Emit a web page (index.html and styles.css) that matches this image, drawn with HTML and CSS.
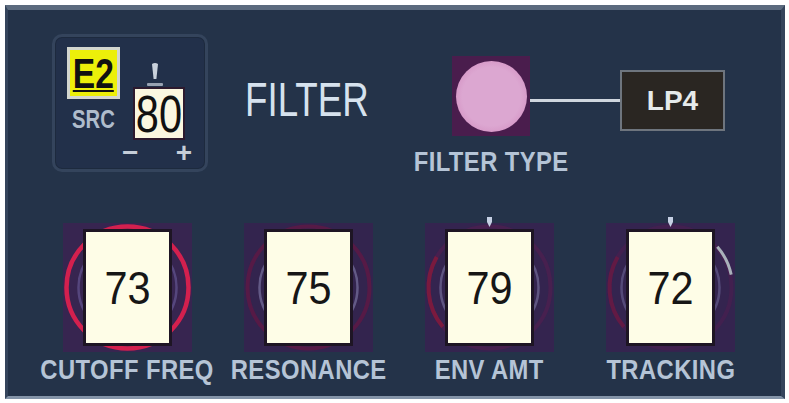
FILE: index.html
```html
<!DOCTYPE html>
<html lang="en">
<head>
<meta charset="utf-8">
<title>Filter</title>
<link rel="stylesheet" href="styles.css">
</head>
<body>
<div class="frame">
  <section class="panel">
    <div class="top">
      <div class="src">
        <div class="src-left">
          <div class="chip"><span class="chip-text">E2</span></div>
          <div class="src-label">SRC</div>
        </div>
        <div class="src-right">
          <svg class="src-tick" viewBox="0 0 20 24" aria-hidden="true">
            <path d="M7 1 Q10 -1 13 1 L11.4 16 H8.6 Z" fill="#c9d1dc"/>
            <rect x="2" y="20" width="16" height="3" rx="1" fill="#98a2b2"/>
          </svg>
          <div class="src-value"><span>80</span></div>
          <div class="src-steps"><span>−</span><span>+</span></div>
        </div>
      </div>

      <div class="title">FILTER</div>

      <div class="ftype">
        <div class="ftype-knob">
          <div class="ftype-pad"><div class="ftype-ball"></div></div>
          <div class="label">FILTER TYPE</div>
        </div>
        <div class="ftype-link">
          <div class="wire"></div>
          <div class="lp">LP4</div>
        </div>
      </div>
    </div>

    <div class="knobs">
      <div class="knob-col">
        <div class="knob">
          <svg viewBox="0 0 129 129" aria-hidden="true">
            <rect width="129" height="129" fill="#372550"/>
            <circle cx="64.5" cy="64.5" r="49" fill="none" stroke="#6f63a3" stroke-width="2.5" opacity=".55"/>
            <circle cx="64.5" cy="64.5" r="61" fill="none" stroke="#d3204e" stroke-width="4.5"/>
          </svg>
          <div class="knob-value"><span>73</span></div>
        </div>
        <div class="label">CUTOFF FREQ</div>
      </div>

      <div class="knob-col">
        <div class="knob">
          <svg viewBox="0 0 129 129" aria-hidden="true">
            <rect width="129" height="129" fill="#33244e"/>
            <circle cx="64.5" cy="64.5" r="49" fill="none" stroke="#8a86b4" stroke-width="2.5" opacity=".55"/>
            <circle cx="64.5" cy="64.5" r="61" fill="none" stroke="#561a46" stroke-width="4"/>
          </svg>
          <div class="knob-value"><span>75</span></div>
        </div>
        <div class="label">RESONANCE</div>
      </div>

      <div class="knob-col">
        <div class="knob">
          <svg viewBox="0 0 129 129" aria-hidden="true">
            <rect width="129" height="129" fill="#34244f"/>
            <circle cx="64.5" cy="64.5" r="49" fill="none" stroke="#8a86b4" stroke-width="2.5" opacity=".5"/>
            <circle cx="64.5" cy="64.5" r="61" fill="none" stroke="#47204f" stroke-width="4"/>
            <path d="M17.8 103.7 A61 61 0 0 1 11.7 34" fill="none" stroke="#7a1a3e" stroke-width="4"/>
            <path d="M62 -6 H67 V-1 L64.5 4 L62 -1 Z" fill="#c6d0e4"/>
          </svg>
          <div class="knob-value"><span>79</span></div>
        </div>
        <div class="label">ENV AMT</div>
      </div>

      <div class="knob-col">
        <div class="knob">
          <svg viewBox="0 0 129 129" aria-hidden="true">
            <rect width="129" height="129" fill="#34244f"/>
            <circle cx="64.5" cy="64.5" r="49" fill="none" stroke="#7f7aae" stroke-width="2.5" opacity=".45"/>
            <circle cx="64.5" cy="64.5" r="61" fill="none" stroke="#42204f" stroke-width="4"/>
            <path d="M17.8 103.7 A61 61 0 0 1 11.7 34" fill="none" stroke="#621a44" stroke-width="4"/>
            <path d="M111.3 23.8 A62 62 0 0 1 125.2 51.6" fill="none" stroke="#a9b1ba" stroke-width="3"/>
            <path d="M62 -6 H67 V-1 L64.5 4 L62 -1 Z" fill="#c6d0e4"/>
          </svg>
          <div class="knob-value"><span>72</span></div>
        </div>
        <div class="label">TRACKING</div>
      </div>
    </div>
  </section>
</div>
</body>
</html>
```

FILE: styles.css
```css
* {
  box-sizing: border-box;
}

body {
  margin: 0;
  background: #ffffff;
  font-family: "Liberation Sans", Arial, sans-serif;
}

.frame {
  width: 789px;
  height: 403px;
  padding: 5px 4px 4px 5px;
}

.panel {
  width: 780px;
  height: 394px;
  background: #243349;
  border-top: 5px solid #5b6a7e;
  border-left: 3px solid #34445b;
  border-right: 4px solid #35455c;
  border-bottom: 3px solid #8494a8;
  display: flex;
  flex-direction: column;
}

/* ---- upper strip: source, title, filter type ---- */
.top {
  height: 213px;
  flex-shrink: 0;
  display: flex;
  align-items: flex-start;
}

.src {
  margin: 24px 0 0 44px;
  width: 156px;
  height: 138px;
  border: 3px solid #34445c;
  border-radius: 10px;
  background: #22304a;
  box-shadow: inset 0 0 0 1px #1d2a3e;
  padding: 10px 0 0 12px;
  display: flex;
  gap: 2px;
}

.src-left {
  width: 53px;
  display: flex;
  flex-direction: column;
  align-items: center;
}

.chip {
  width: 53px;
  height: 52px;
  border: 3px solid #d3d6cf;
  background: #ecef0a;
  display: flex;
  align-items: center;
  justify-content: center;
}

.chip-text {
  display: inline-block;
  font-size: 43px;
  line-height: 1;
  font-weight: bold;
  color: #111111;
  transform: scaleX(0.78);
  text-decoration: underline;
  text-decoration-thickness: 2px;
  text-underline-offset: 2px;
}

.src-label {
  margin-top: 8px;
  font-size: 25px;
  line-height: 25px;
  font-weight: bold;
  color: #afbccc;
  white-space: nowrap;
  transform: scaleX(0.81);
}

.src-right {
  width: 70px;
  display: flex;
  flex-direction: column;
}

.src-tick {
  display: block;
  width: 20px;
  height: 24px;
  margin: 16px 0 0 23px;
}

.src-value {
  margin-left: 11px;
  width: 52px;
  height: 53px;
  background: #fbf7e0;
  border: 2px solid #2d1a2e;
  display: flex;
  align-items: center;
  justify-content: center;
}

.src-value span {
  display: inline-block;
  font-size: 52px;
  line-height: 1;
  color: #111111;
  transform: scaleX(0.8);
}

.src-steps {
  margin-top: 4px;
  display: flex;
  justify-content: space-between;
  font-size: 28px;
  line-height: 18px;
  font-weight: bold;
  color: #c5cdd8;
}

.title {
  margin: 66px 0 0 37px;
  width: 126px;
  font-size: 48px;
  line-height: 48px;
  color: #d6e2ee;
  white-space: nowrap;
  transform: scaleX(0.765);
  transform-origin: left center;
}

.ftype {
  margin: 46px 0 0 81px;
  display: flex;
  align-items: flex-start;
}

.ftype-knob {
  width: 78px;
  display: flex;
  flex-direction: column;
  align-items: center;
}

.ftype-pad {
  width: 78px;
  height: 80px;
  background: #4a1d4d;
  display: flex;
  align-items: center;
  justify-content: center;
}

.ftype-ball {
  width: 71px;
  height: 71px;
  border-radius: 50%;
  background: radial-gradient(circle, #dca7d1 0 58%, #d698c7 74%, #c57fb6 90%, #8a3c7c 100%);
}

.ftype-knob .label {
  margin-top: 12px;
}

.ftype-link {
  margin-top: 14px;
  height: 61px;
  display: flex;
  align-items: center;
}

.wire {
  width: 90px;
  height: 3px;
  background: #cfd6de;
}

.lp {
  width: 105px;
  height: 61px;
  background: #2a2622;
  border: 2px solid #6e757e;
  display: flex;
  align-items: center;
  justify-content: center;
  font-size: 28px;
  font-weight: bold;
  color: #e6eaea;
}

/* ---- shared caption style ---- */
.label {
  font-size: 28px;
  line-height: 28px;
  font-weight: bold;
  color: #b5c4d6;
  white-space: nowrap;
  letter-spacing: 0.5px;
  transform: scaleX(0.85);
}

/* ---- knob row ---- */
.knobs {
  display: flex;
  padding-left: 29px;
}

.knob-col {
  width: 181px;
  display: flex;
  flex-direction: column;
  align-items: center;
}

.knob {
  width: 129px;
  height: 129px;
  display: grid;
  place-items: center;
}

.knob > * {
  grid-area: 1 / 1;
}

.knob svg {
  display: block;
  width: 129px;
  height: 129px;
  overflow: visible;
}

.knob-value {
  width: 89px;
  height: 117px;
  background: #fefde7;
  border: 3px solid #1e1524;
  display: flex;
  align-items: center;
  justify-content: center;
}

.knob-value span {
  display: inline-block;
  font-size: 46px;
  line-height: 1;
  color: #161616;
  transform: scaleX(0.9);
}

.knob-col .label {
  margin-top: 4px;
}
```
